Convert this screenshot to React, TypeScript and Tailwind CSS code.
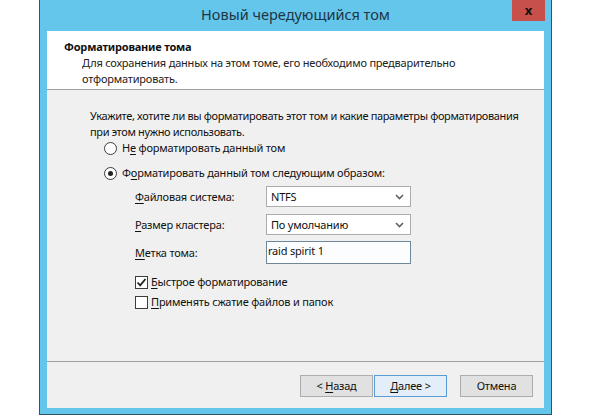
import React from 'react';

const Acc = ({ children }: { children: React.ReactNode }) => (
  <span className="underline underline-offset-2">{children}</span>
);

const Radio = ({ checked }: { checked?: boolean }) => (
  <span className="flex h-[13px] w-[13px] items-center justify-center rounded-full border border-[#3c3c3c] bg-white">
    {checked && <span className="h-[5px] w-[5px] rounded-full bg-[#222]" />}
  </span>
);

const Check = ({ checked }: { checked?: boolean }) => (
  <span className="flex h-[13px] w-[13px] items-center justify-center border border-[#3c3c3c] bg-white">
    {checked && (
      <svg width="11" height="11" viewBox="0 0 11 11">
        <path d="M1.5 5.5 L4.2 8.3 L9.5 2" fill="none" stroke="#222" strokeWidth="1.8" />
      </svg>
    )}
  </span>
);

const Combo = ({ value }: { value: string }) => (
  <div className="flex h-[21px] w-[145px] items-center justify-between border border-[#acacac] bg-white pl-[4px] pr-[6px]">
    <span>{value}</span>
    <svg width="9" height="6" viewBox="0 0 9 6">
      <path d="M1 1 L4.5 4.5 L8 1" fill="none" stroke="#606060" strokeWidth="1.6" />
    </svg>
  </div>
);

const Btn = ({ children, primary }: { children: React.ReactNode; primary?: boolean }) => (
  <div
    className={`flex h-[22px] w-[73px] items-center justify-center border ${
      primary ? 'border-[#5b9bd5] bg-[#e3eef8]' : 'border-[#adadad] bg-[#e1e1e1]'
    }`}
  >
    <span className="whitespace-pre">{children}</span>
  </div>
);

export default function App() {
  return (
    <div className="min-h-screen whitespace-nowrap bg-white font-['Noto_Sans',sans-serif] text-[11px] leading-[16px] tracking-[-0.2px] text-[#111]">
      <div className="ml-[39px] w-[513px] border-x border-b border-[#2f5566] bg-[#64c6ea] px-[7px] pb-[6px]">
        {/* title bar */}
        <div className="relative flex h-[31px] items-center justify-center pb-[3px]">
          <span className="text-[14.5px] tracking-normal text-[#1e3545]">Новый чередующийся том</span>
          <div className="absolute right-[-1px] top-0 flex h-[21px] w-[33px] items-center justify-center bg-[#c7504a]">
            <span className="text-[13px] font-bold leading-none text-[#111]">x</span>
          </div>
        </div>

        {/* header */}
        <div className="h-[58px] bg-white pl-[17px] pt-[8px]">
          <div className="font-bold">Форматирование тома</div>
          <div className="pl-[18px] text-[#222]">
            <div>Для сохранения данных на этом томе, его необходимо предварительно</div>
            <div>отформатировать.</div>
          </div>
        </div>
        <div className="h-px bg-[#a0a0a0]" />

        {/* body */}
        <div className="h-[271px] bg-[#f0f0f0] pt-[18px]">
          <div className="pl-[43px] tracking-[-0.35px]">
            <div>Укажите, хотите ли вы форматировать этот том и какие параметры форматирования</div>
            <div>при этом нужно использовать.</div>
          </div>

          <div className="ml-[57px] flex h-[16px] items-center gap-[5px]">
            <Radio />
            <span>
              Н<Acc>е</Acc> форматировать данный том
            </span>
          </div>
          <div className="ml-[57px] mt-[9px] flex h-[16px] items-center gap-[5px]">
            <Radio checked />
            <span>
              Ф<Acc>о</Acc>рматировать данный том следующим образом:
            </span>
          </div>

          <div className="ml-[88px] mt-[5px] flex flex-col gap-[7px]">
            <div className="flex items-center">
              <span className="w-[131px]">
                <Acc>Ф</Acc>айловая система:
              </span>
              <Combo value="NTFS" />
            </div>
            <div className="flex items-center">
              <span className="w-[131px]">
                <Acc>Р</Acc>азмер кластера:
              </span>
              <Combo value="По умолчанию" />
            </div>
            <div className="-mt-[1px] flex items-center">
              <span className="w-[131px]">
                <Acc>М</Acc>етка тома:
              </span>
              <div className="h-[23px] w-[145px] border border-[#6f8797] bg-[#fbfdff] pl-[1px] pt-px">raid spirit 1</div>
            </div>
          </div>

          <div className="ml-[88px] mt-[10px] flex h-[16px] items-center gap-[3px]">
            <Check checked />
            <span>
              <Acc>Б</Acc>ыстрое форматирование
            </span>
          </div>
          <div className="ml-[88px] mt-[4px] flex h-[16px] items-center gap-[3px]">
            <Check />
            <span>
              <Acc>П</Acc>рименять сжатие файлов и папок
            </span>
          </div>
        </div>
        <div className="h-px bg-[#a0a0a0]" />

        {/* footer */}
        <div className="flex h-[46px] items-start justify-end bg-[#f0f0f0] pr-[11px] pt-[13px]">
          <Btn>
            {'< '}
            <Acc>Н</Acc>азад
          </Btn>
          <div className="w-px" />
          <Btn primary>
            <Acc>Д</Acc>
            {'алее >'}
          </Btn>
          <div className="w-[13px]" />
          <Btn>Отмена</Btn>
        </div>
      </div>
    </div>
  );
}
